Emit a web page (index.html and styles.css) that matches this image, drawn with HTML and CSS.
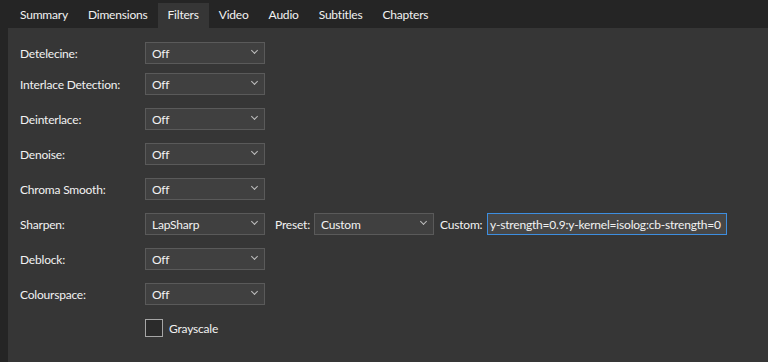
FILE: index.html
```html
<!DOCTYPE html>
<html lang="en">
<head>
    <meta charset="UTF-8">
    <meta name="viewport" content="width=device-width, initial-scale=1.0">
    <title>Filters</title>
    <link rel="stylesheet" href="styles.css">
</head>
<body>
    <nav class="tabs">
        <span class="tab">Summary</span>
        <span class="tab">Dimensions</span>
        <span class="tab active">Filters</span>
        <span class="tab">Video</span>
        <span class="tab">Audio</span>
        <span class="tab">Subtitles</span>
        <span class="tab">Chapters</span>
    </nav>

    <main class="panel">
        <div class="row first">
            <label>Detelecine:</label>
            <div class="select"><span>Off</span><i class="chev"></i></div>
        </div>
        <div class="row tight">
            <label>Interlace Detection:</label>
            <div class="select"><span>Off</span><i class="chev"></i></div>
        </div>
        <div class="row">
            <label>Deinterlace:</label>
            <div class="select"><span>Off</span><i class="chev"></i></div>
        </div>
        <div class="row">
            <label>Denoise:</label>
            <div class="select"><span>Off</span><i class="chev"></i></div>
        </div>
        <div class="row">
            <label>Chroma Smooth:</label>
            <div class="select"><span>Off</span><i class="chev"></i></div>
        </div>
        <div class="row">
            <label>Sharpen:</label>
            <div class="select"><span>LapSharp</span><i class="chev"></i></div>
            <label class="inline preset">Preset:</label>
            <div class="select"><span>Custom</span><i class="chev"></i></div>
            <label class="inline custom">Custom:</label>
            <div class="textbox">y-strength=0.9:y-kernel=isolog:cb-strength=0</div>
        </div>
        <div class="row">
            <label>Deblock:</label>
            <div class="select"><span>Off</span><i class="chev"></i></div>
        </div>
        <div class="row">
            <label>Colourspace:</label>
            <div class="select"><span>Off</span><i class="chev"></i></div>
        </div>
        <div class="row check-row">
            <label></label>
            <div class="check"></div>
            <span class="check-label">Grayscale</span>
        </div>
    </main>
</body>
</html>
```

FILE: styles.css
```css
* {
    margin: 0;
    padding: 0;
    box-sizing: border-box;
    font-family: Lato, "Open Sans", sans-serif;
}

body {
    background-color: #252525;
    color: #f2f2f2;
    font-size: 12px;
    letter-spacing: -0.2px;
    height: 100vh;
    display: flex;
    flex-direction: column;
    overflow: hidden;
}

.tabs {
    display: flex;
    height: 28px;
    padding: 3px 0 0 10px;
    align-items: stretch;
}

.tab {
    display: flex;
    align-items: center;
    padding: 0 10px 2px;
    line-height: 1;
}

.tab.active {
    background-color: #363636;
}

.panel {
    flex: 1;
    margin-left: 8px;
    background-color: #363636;
    padding: 14px 0 0 12px;
}

.row {
    display: flex;
    align-items: center;
    height: 22px;
    margin-top: 13px;
}

.row.first {
    margin-top: 0;
}

.row.tight {
    margin-top: 9px;
}

.row label {
    width: 125px;
    flex-shrink: 0;
}

.row label.preset {
    width: 39px;
    margin-left: 10px;
}

.row label.custom {
    width: 47px;
    margin-left: 6px;
}

.select {
    width: 120px;
    height: 22px;
    flex-shrink: 0;
    background-color: #404040;
    border: 1px solid #5a5a5a;
    display: flex;
    align-items: center;
    justify-content: space-between;
    padding: 0 7px 0 6px;
}

.chev {
    width: 5px;
    height: 5px;
    border-right: 1px solid #bdbdbd;
    border-bottom: 1px solid #bdbdbd;
    transform: rotate(45deg);
    margin-top: -5px;
}

.textbox {
    width: 240px;
    height: 22px;
    flex-shrink: 0;
    background-color: #474747;
    border: 1px solid #3d8ee0;
    padding: 0 0 0 2px;
    display: flex;
    align-items: center;
    white-space: nowrap;
    overflow: hidden;
}

.check-row {
    margin-top: 14px;
    height: 18px;
}

.check {
    width: 18px;
    height: 18px;
    background-color: #2b2b2b;
    border: 1px solid #a6a6a6;
    margin-right: 6px;
}
```
